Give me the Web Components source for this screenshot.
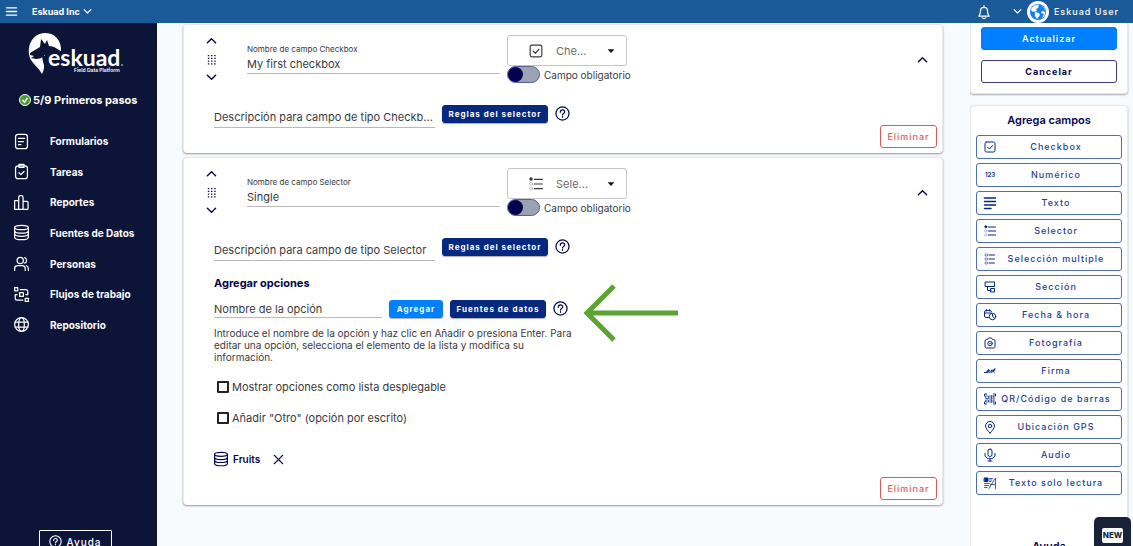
<!DOCTYPE html>
<html lang="es">
<head>
<meta charset="utf-8">
<meta name="viewport" content="width=device-width, initial-scale=1">
<title>Eskuad</title>
<style>
  html, body { margin: 0; height: 100%; }
  body {
    --navy: #06064f; --ink: #3a3a3f; --blue: #007fff; --royal: #04297f; --line: #b9b9bd; --red: #e2595c;
    --sidebar: #0c1437; --bar: #1b5a98;
    font-family: Inter, "Open Sans", sans-serif; font-size: 11px; color: var(--ink);
    overflow: hidden; background: #f8fbfe;
  }
</style>
</head>
<body>
<eskuad-app></eskuad-app>
<script>
const ICONS = {
  menu: '<path d="M1 4h22M1 12h22M1 20h22" stroke-width="3"/>',
  down: '<path d="M3 7l9 9 9-9"/>',
  up: '<path d="M3 17l9-9 9 9"/>',
  grip: '<g fill="currentColor" stroke="none"><path d="M4 2h3v3H4zM11 2h3v3h-3zM18 2h3v3h-3zM4 8h3v3H4zM11 8h3v3h-3zM18 8h3v3h-3zM4 14h3v3H4zM11 14h3v3h-3zM18 14h3v3h-3zM4 20h3v3H4zM11 20h3v3h-3zM18 20h3v3h-3z"/></g>',
  bell: '<path d="M3 19c3-3 3-5 3-9 0-4 2-6 6-6s6 2 6 6c0 4 0 6 3 9zM12 4V1M9 22c2 1.500 4 1.500 6 0"/>',
  form: '<rect x="2.500" y="0.500" width="19" height="23" rx="4"/><path d="M7 7h10M7 12h8M7 17h4"/>',
  task: '<rect x="2.500" y="3" width="19" height="20.500" rx="4"/><path d="M8 .5h8v5H8zM8 14l3 3 5-5"/>',
  bars: '<path d="M1 9h6.500v14H1zM7.500 3.500A2.500 2.500 0 0 1 10 1h2a2.500 2.500 0 0 1 2.500 2.500V23h-7zM14.500 10h6a2 2 0 0 1 2 2v9a2 2 0 0 1-2 2h-6z"/>',
  db: '<ellipse cx="12" cy="4" rx="11" ry="3.500"/><path d="M1 4v15.500c0 2 4 4 11 4s11-2 11-4V4M1 9c0 2 4 4 11 4s11-2 11-4M1 14c0 2 4 4 11 4s11-2 11-4"/>',
  people: '<circle cx="10" cy="7" r="5"/><path d="M1 23v-2.500c0-3 2-5 5-5h7c3 0 5 2 5 5V23M17 2.500c4 1 4 8 0 9M20 15.500c2 1 3 2.500 3 5V23"/>',
  flow: '<path d="M1 1h5v5H1zM18 18h5v5h-5zM9 9h6v6H9zM10 4h9a3 3 0 0 1 3 3v5h-3M14 21H5a3 3 0 0 1-3-3v-6h3"/>',
  globe: '<circle cx="12" cy="12" r="11"/><ellipse cx="12" cy="12" rx="4.500" ry="11"/><path d="M2 8h20M2 16h20"/>',
  help: '<circle cx="12" cy="12" r="10.500"/><path d="M8.500 10c0-5 7-4.500 7-.5 0 2.500-3.500 2.500-3.500 5M12 17v1"/>',
  close: '<path d="M3 3l18 18M21 3L3 21"/>',
  caret: '<path d="M2 7h20L12 18z" fill="currentColor" stroke="none"/>',
  check: '<rect x="2" y="2" width="20" height="20" rx="3"/><path d="M7 12l4 4 6-7"/>',
  text: '<path d="M1 2h22M1 9h22M1 16h22M1 23h13" stroke-width="3"/>',
  selector: '<path d="M9 4h14M9 12h14M9 20h14"/><circle cx="3.500" cy="3.500" r="2" fill="currentColor"/><g stroke-width="1" opacity=".5"><circle cx="3.500" cy="12" r="2.500"/><circle cx="3.500" cy="20" r="2.500"/></g>',
  multi: '<path d="M10 4h11M10 12h11M10 20h11"/><g stroke-width="1"><path d="M3 2h4v4H3zM3 10h4v4H3zM3 18h4v4H3z"/></g>',
  section: '<path d="M3 2h18v9H3zM7 11v8h7M14 15h7v7h-7z"/>',
  date: '<path d="M9 17H4a3 3 0 0 1-3-3V6a3 3 0 0 1 3-3h8a3 3 0 0 1 3 3M1 8h13M5 1v3M11 1v3"/><circle cx="17" cy="15" r="6.500"/><path d="M17 11v4l3 2"/>',
  camera: '<path d="M2 8a3 3 0 0 1 3-3h2l2-3h6l2 3h2a3 3 0 0 1 3 3v11a3 3 0 0 1-3 3H5a3 3 0 0 1-3-3z"/><circle cx="12" cy="13" r="4.500"/><path d="M11.500 13h1"/>',
  sign: '<path d="M1 15h4c2 0 6-6 4-6s-5 7-3 7 4-5 5-6c-2 3-2 6 0 5s3-2 4-2c-2 2 0 3 2 1l5-7c-2 3-4 8-2 8M14 11l8-1"/>',
  qr: '<path d="M1 6V2h4M19 2h4v4M23 18v4h-4M5 22H1v-4"/><g stroke-width="1.500"><path d="M4 6h5v5H4zM4 14h5v4H4zM12 5v14M15 5v14M18 5v6M20 5v14M18 14v5"/></g>',
  pin: '<path d="M12 24C7 19 3 14 3 10a9 9 0 0 1 18 0c0 4-4 9-9 14z"/><circle cx="12" cy="10" r="3.500"/>',
  mic: '<rect x="8" y="0" width="8" height="15" rx="4"/><path d="M2 9v3c0 10 20 10 20 0V9M12 19.500V24M8 24h8"/>',
  read: '<path d="M1 2h7v7H1z" fill="currentColor"/><g stroke-width="1.500"><path d="M11 3h6M11 6h5M11 9h3M1 13h10M1 17h8M1 21h5M10 23L22 3M13 15h9M23 3v20"/></g>'
};

const define = (name, html, setup) => {
  const template = document.createElement('template');
  template.innerHTML = html;
  customElements.define(name, class extends HTMLElement {
    connectedCallback() {
      if (this.shadowRoot) return;
      const content = template.content.cloneNode(true);
      if (setup) setup(this, content);
      this.attachShadow({ mode: 'open' }).append(content);
    }
  });
};

define('ui-icon', `<style>
  :host { display: block; flex: none; width: var(--size, 15px); height: var(--size, 15px); }
  svg { display: block; width: 100%; height: 100%; overflow: visible; }
</style><svg viewBox="0 0 24 24" fill="none" stroke="currentColor" stroke-width="2" stroke-linecap="round" stroke-linejoin="round" aria-hidden="true"></svg>`,
(host, root) => {
  const svg = root.querySelector('svg');
  svg.innerHTML = ICONS[host.getAttribute('name')];
  if (host.hasAttribute('bold')) svg.setAttribute('stroke-width', '3');
});

define('ui-button', `<style>
  :host { display: block; flex: none; }
  button { display: flex; align-items: center; justify-content: center; gap: 4px; width: 100%; height: 23px; box-sizing: border-box;
    margin: 0; padding: 0 6px; border: 1px solid #3a3b7c; border-radius: 3px; background: #fff; color: var(--navy);
    font: 700 9px/14px Inter, sans-serif; letter-spacing: 1px; white-space: nowrap; }
  :host([kind=primary]) button { background: var(--blue); border-color: var(--blue); color: #fff; font-weight: 600; }
  :host([kind=danger]) button { border-color: currentColor; color: var(--red); font-weight: 500; padding: 0 5px; }
  :host([kind=ghost]) button { border-color: currentColor; background: none; color: #fff; font-size: 10px; font-weight: 500; padding: 0 10px; border-radius: 1px; }
  :host([small]) button { height: 18px; padding: 0 7px; font-size: 8px; font-weight: 700; box-shadow: 0 1px 1px #0005; }
  :host([kind=royal]) button { background: var(--royal); border-color: var(--royal); color: #fff; }
</style><button type="button"><slot></slot></button>`);

define('help-button', `<style>
  :host { display: block; }
  button { display: block; padding: 0; border: 0; background: none; color: var(--navy); }
</style><button type="button" aria-label="Ayuda"><ui-icon name="help"></ui-icon></button>`);

define('top-bar', `<style>
  :host { display: flex; align-items: center; height: 23px; padding: 0 14px 0 6px; box-sizing: border-box; background: var(--bar); color: #fff; }
  button { display: flex; align-items: center; gap: 3px; padding: 0; border: 0; background: none; color: inherit; font: 700 9px/12px Inter, sans-serif; }
  .menu { margin-right: 15px; --size: 11px; }
  .org { --size: 9px; }
  .bell { margin-left: auto; margin-right: 22px; --size: 14px; }
  .user { gap: 5px; font-weight: 500; letter-spacing: 1px; --size: 9px; }
  .avatar { width: 22px; height: 22px; }
  .user span { white-space: nowrap; }
</style>
<button class="menu" aria-label="Menú"><ui-icon name="menu"></ui-icon></button>
<button class="org">Eskuad Inc <ui-icon name="down" bold></ui-icon></button>
<button class="bell" aria-label="Notificaciones"><ui-icon name="bell"></ui-icon></button>
<button class="user"><ui-icon name="down" bold></ui-icon>
<svg class="avatar" viewBox="0 0 22 22" aria-hidden="true"><circle cx="11" cy="11" r="11" fill="#fff"/><circle cx="11" cy="11" r="8" fill="#1780e8"/><path d="M4 8c2-4 6-5 8-4l-1 3-2 1 1 2-3 1-1-1-1 1zM8 11l4 1 1 2-3 4-2-3zM14 5l4 3v3l-3-1-1 2 3 1-2 4c4-2 4-8 1-11z" fill="#fff"/></svg>
<span>Eskuad User</span></button>`);

define('brand-logo', `<style>
  :host { display: block; width: 96px; height: 42px; }
  svg { display: block; overflow: visible; }
</style>
<svg width="96" height="42" viewBox="0 0 96 42" role="img" aria-label="eskuad Field Data Platform">
<path d="M14 41C11 35 6 32 3 27-3 15 4 0 17 0c9 0 15 6 16 15v3l-7 5H14l1 6c2 4 1 8-1 12z" fill="#fff"/>
<path d="M2 20l5-3 5-3 1-8 4 5 2-4 2 6c6 0 9 4 12 5v13H19c-2-3-3-6-2-9-3 3-6 4-9 4l-5-1 3-2-4-1z" fill="#0c1437"/>
<text x="20" y="33" font-family="Lato, sans-serif" font-weight="700" font-size="23" fill="#fff">eskuad</text>
<text x="46" y="39" font-family="Inter, sans-serif" font-weight="600" font-size="5" fill="#fff">Field Data Platform</text>
<circle cx="94" cy="32" r="1" fill="#8a90a8"/>
</svg>`);

define('nav-item', `<style>
  :host { display: block; }
  a { display: grid; grid-template-columns: 15px 1fr; column-gap: 21px; align-items: center; height: 100%; padding-left: 14px; color: #fff; text-decoration: none; font: 700 10px/14px Inter, sans-serif; white-space: nowrap; }
</style><a href="#"><ui-icon></ui-icon><slot></slot></a>`,
(host, root) => root.querySelector('ui-icon').setAttribute('name', host.getAttribute('icon')));

define('side-bar', `<style>
  :host { display: flex; flex-direction: column; align-items: stretch; box-sizing: border-box; padding-top: 10px; background: var(--sidebar); color: #fff; overflow: hidden; }
  brand-logo { margin-left: 28px; }
  .progress { display: flex; align-items: center; gap: 2px; margin: 16px 0 0 19px; height: 18px; font: 700 11px/18px Inter, sans-serif; white-space: nowrap; }
  nav { display: grid; grid-auto-rows: 1fr; flex: none; height: 214px; margin-top: 17px; }
  ui-button { align-self: center; width: 73px; margin: 190px 6px 0 0; --size: 13px; }
</style>
<brand-logo></brand-logo>
<div class="progress"><svg width="12" height="12" viewBox="0 0 12 12" aria-hidden="true"><circle cx="6" cy="6" r="5.500" fill="#4a9d2f" stroke="#fff"/><path d="M3.500 6l2 2 3-4" fill="none" stroke="#fff" stroke-width="1.500"/></svg>5/9 Primeros pasos</div>
<nav>
<nav-item icon="form">Formularios</nav-item>
<nav-item icon="task">Tareas</nav-item>
<nav-item icon="bars">Reportes</nav-item>
<nav-item icon="db">Fuentes de Datos</nav-item>
<nav-item icon="people">Personas</nav-item>
<nav-item icon="flow">Flujos de trabajo</nav-item>
<nav-item icon="globe">Repositorio</nav-item>
</nav>
<ui-button kind="ghost"><ui-icon name="help"></ui-icon>Ayuda</ui-button>`);

define('field-card', `<style>
  :host { display: block; box-sizing: border-box; border: 1px solid #e6e8eb; border-bottom: 0; border-radius: 4px; background: #fff; box-shadow: 0 1px 2px #0006; }
  header { display: flex; height: 48px; padding: 10px 14px 0 22px; color: var(--navy); }
  button { display: block; padding: 0; border: 0; background: none; color: inherit; --size: 11px; }
  .move { display: flex; flex-direction: column; justify-content: space-between; width: 11px; margin-right: 30px; }
  .name { flex: 0 1 253px; min-width: 0; box-sizing: border-box; height: 39px; padding-top: 8px; border-bottom: 1px solid var(--line); color: var(--ink); }
  .name label { display: block; font-size: 8px; line-height: 12px; }
  input { font: 11px/16px Inter, sans-serif; color: inherit; box-sizing: border-box; }
  .name input { display: block; width: 100%; height: 18px; padding: 0; border: 0; background: none; }
  .type { flex: none; width: 120px; margin-left: 7px; color: var(--ink); }
  .pick { display: flex; align-items: center; box-sizing: border-box; height: 31px; padding: 0 11px 0 21px; border: 1px solid #c4c4c8; border-radius: 3px; --size: 14px; }
  .pick .caret { --size: 8px; color: #111; }
  select { flex: 1; min-width: 0; appearance: none; margin: 0 0 0 13px; padding: 0; border: 0; background: none; color: #6a6a6e; font: 11px/16px Inter, sans-serif; }
  .req { display: flex; align-items: center; gap: 4px; height: 17px; font-size: 10px; line-height: 12px; white-space: nowrap; }
  .req input { appearance: none; flex: none; width: 33px; height: 17px; margin: 0; padding: 0; border: 1px solid #5a5c9c; border-radius: 9px; background: #98a3b3; }
  .req input::before { content: ""; display: block; width: 15px; height: 15px; border-radius: 50%; background: #02024f; }
  .collapse { align-self: center; margin-left: auto; }
  .desc { display: flex; align-items: flex-start; gap: 7px; margin: 22px 30px 0; }
  .desc input { flex: 0 1 221px; min-width: 0; height: 23px; padding: 2px 0 0; border: 0; border-bottom: 1px solid var(--line); background: none; }
  ::placeholder { color: var(--ink); opacity: 1; }
  .desc ui-button { width: 106px; }
  .desc help-button { margin-top: 1px; }
  footer { display: flex; justify-content: flex-end; margin: -3px 5px 0 0; padding-bottom: 5px; }
  footer ui-button { width: 57px; }
</style>
<header>
<div class="move"><button aria-label="Subir"><ui-icon name="up" bold></ui-icon></button><button aria-label="Mover"><ui-icon name="grip"></ui-icon></button><button aria-label="Bajar"><ui-icon name="down" bold></ui-icon></button></div>
<div class="name"><label for="name"></label><input id="name"></div>
<div class="type"><div class="pick"><ui-icon class="kind"></ui-icon><select aria-label="Tipo de campo"><option></option></select><ui-icon class="caret" name="caret"></ui-icon></div>
<label class="req"><input type="checkbox" role="switch">Campo obligatorio</label></div>
<button class="collapse" aria-label="Contraer"><ui-icon name="up" bold></ui-icon></button>
</header>
<div class="desc"><input aria-label="Descripción"><ui-button small kind="royal">Reglas del selector</ui-button><help-button></help-button></div>
<slot></slot>
<footer><ui-button kind="danger">Eliminar</ui-button></footer>`,
(host, root) => {
  const get = key => host.getAttribute(key);
  root.querySelector('.name label').textContent = 'Nombre de campo ' + get('type');
  root.querySelector('#name').value = get('value');
  root.querySelector('.kind').setAttribute('name', get('icon'));
  root.querySelector('option').textContent = get('short');
  root.querySelector('.desc input').placeholder = get('description');
});

define('option-editor', `<style>
  :host { display: block; padding: 0 30px 13px; }
  h3 { margin: 14px 0 9px; font: 700 11px/16px Inter, sans-serif; color: var(--navy); }
  .row { display: flex; align-items: flex-start; gap: 7px; position: relative; }
  .row input { flex: 0 1 168px; min-width: 0; box-sizing: border-box; height: 18px; padding: 0; border: 0; border-bottom: 1px solid var(--line); background: none; font: 11px/16px Inter, sans-serif; }
  ::placeholder { color: var(--ink); opacity: 1; }
  .add { width: 54px; } .source { width: 96px; }
  help-button { margin-top: 1px; }
  .arrow { position: absolute; left: 369px; top: -16px; }
  p { max-width: 362px; margin: 9px 0 0; font-size: 10px; line-height: 12px; }
  .opt { display: flex; align-items: center; gap: 3px; height: 14px; margin: 17px 0 0 3px; line-height: 14px; }
  .opt input { appearance: none; box-sizing: border-box; width: 12px; height: 12px; margin: 0; border: 2px solid #222; border-radius: 1px; background: #fff; }
  .source-row { display: flex; align-items: center; height: 16px; margin-top: 26px; color: var(--navy); font: 600 10px/14px Inter, sans-serif; --size: 14px; }
  .source-row span { margin: 0 13px 0 5px; }
  .source-row button { padding: 0; border: 0; background: none; color: inherit; --size: 11px; }
</style>
<h3>Agregar opciones</h3>
<div class="row"><input placeholder="Nombre de la opción" aria-label="Nombre de la opción"><ui-button class="add" small kind="primary">Agregar</ui-button><ui-button class="source" small kind="royal">Fuentes de datos</ui-button><help-button></help-button>
<svg class="arrow" width="95" height="58" viewBox="0 0 95 58" fill="none" stroke="#5ba431" stroke-width="5" aria-hidden="true"><path d="M31 2L4 29l27 27M4 29h91"/></svg></div>
<p>Introduce el nombre de la opción y haz clic en Añadir o presiona Enter. Para editar una opción, selecciona el elemento de la lista y modifica su información.</p>
<label class="opt"><input type="checkbox">Mostrar opciones como lista desplegable</label>
<label class="opt"><input type="checkbox">Añadir "Otro" (opción por escrito)</label>
<div class="source-row"><ui-icon name="db"></ui-icon><span>Fruits</span><button aria-label="Quitar"><ui-icon name="close" bold></ui-icon></button></div>`);

define('add-field', `<style>
  :host { display: block; }
  button { display: flex; align-items: center; width: 100%; height: 24px; box-sizing: border-box; padding: 0 5px 0 7px; border: 1px solid #4a6db5; border-radius: 3px; background: #fff; color: #1c3f8f; font: 500 9px/14px Inter, sans-serif; letter-spacing: 1px; white-space: nowrap; --size: 12px; }
  ui-icon { color: #04297f; }
  .num { flex: none; width: 12px; font: 700 6px/10px Inter, sans-serif; letter-spacing: 0; }
  .label { flex: 1; text-align: center; }
</style><button type="button"><span class="label"><slot></slot></span></button>`,
(host, root) => {
  const name = host.getAttribute('icon');
  const icon = document.createElement(name === '123' ? 'span' : 'ui-icon');
  if (name === '123') { icon.className = 'num'; icon.textContent = '123'; } else icon.setAttribute('name', name);
  root.querySelector('button').prepend(icon);
});

define('tool-panel', `<style>
  :host { display: flex; flex-direction: column; gap: 11px; }
  section { box-sizing: border-box; border: 1px solid #e6e8eb; border-radius: 4px; background: #fff; box-shadow: 0 1px 2px #0005; }
  .actions { display: grid; gap: 10px; padding: 4px 10px 10px; border-top: 0; border-radius: 0 0 4px 4px; }
  .fields { padding: 6px 5px 20px; }
  h2 { margin: 0; text-align: center; color: var(--navy); font: 600 11px/16px Inter, sans-serif; }
  .list { display: grid; gap: 4px; margin: 7px 0 43px; }
</style>
<section class="actions"><ui-button kind="primary">Actualizar</ui-button><ui-button>Cancelar</ui-button></section>
<section class="fields"><h2>Agrega campos</h2>
<div class="list">
<add-field icon="check">Checkbox</add-field>
<add-field icon="123">Numérico</add-field>
<add-field icon="text">Texto</add-field>
<add-field icon="selector">Selector</add-field>
<add-field icon="multi">Selección multiple</add-field>
<add-field icon="section">Sección</add-field>
<add-field icon="date">Fecha &amp; hora</add-field>
<add-field icon="camera">Fotografía</add-field>
<add-field icon="sign">Firma</add-field>
<add-field icon="qr">QR/Código de barras</add-field>
<add-field icon="pin">Ubicación GPS</add-field>
<add-field icon="mic">Audio</add-field>
<add-field icon="read">Texto solo lectura</add-field>
</div>
<h2>Ayuda</h2></section>`);

define('news-badge', `<style>
  :host { display: block; position: fixed; right: 2px; bottom: 0; }
  button { display: flex; justify-content: center; width: 37px; height: 29px; padding: 11px 0 0; border: 0; border-radius: 5px 5px 0 0; background: #1a2239; }
  span { height: 15px; padding: 0 1px; border-radius: 2px; background: #fff; color: #1a2239; font: 800 8px/15px Inter, sans-serif; }
</style><button type="button"><span>NEW</span></button>`);

define('eskuad-app', `<style>
  :host { display: grid; grid-template: 23px minmax(0, 1fr) / 157px minmax(0, 1fr) 158px; height: 100vh; box-sizing: border-box; padding-right: 5px; }
  top-bar { grid-column: 1 / -1; margin-right: -5px; }
  main { display: flex; flex-direction: column; gap: 4px; padding: 1px 27px 0 26px; overflow: hidden; }
  field-card { flex: none; }
  aside { overflow: hidden; margin-right: -2px; padding-right: 2px; }
</style>
<top-bar></top-bar>
<side-bar></side-bar>
<main>
<field-card type="Checkbox" value="My first checkbox" icon="check" short="Che..." description="Descripción para campo de tipo Checkb..."></field-card>
<field-card type="Selector" value="Single" icon="selector" short="Sele..." description="Descripción para campo de tipo Selector"><option-editor></option-editor></field-card>
</main>
<aside><tool-panel></tool-panel></aside>
<news-badge></news-badge>`);
</script>
</body>
</html>
